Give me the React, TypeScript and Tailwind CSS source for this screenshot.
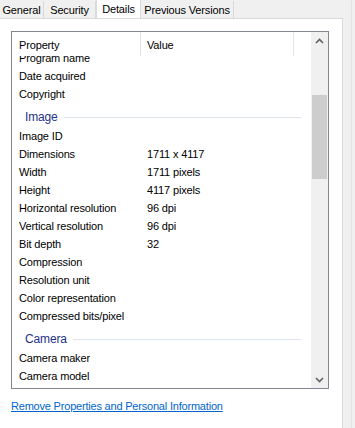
import React from "react";

const font = { fontFamily: '"Liberation Sans", Arial, sans-serif' };

type Row = { label: string; value?: string } | { group: string };

const rows: Row[] = [
  { label: "Program name" },
  { label: "Date acquired" },
  { label: "Copyright" },
  { group: "Image" },
  { label: "Image ID" },
  { label: "Dimensions", value: "1711 x 4117" },
  { label: "Width", value: "1711 pixels" },
  { label: "Height", value: "4117 pixels" },
  { label: "Horizontal resolution", value: "96 dpi" },
  { label: "Vertical resolution", value: "96 dpi" },
  { label: "Bit depth", value: "32" },
  { label: "Compression" },
  { label: "Resolution unit" },
  { label: "Color representation" },
  { label: "Compressed bits/pixel" },
  { group: "Camera" },
  { label: "Camera maker" },
  { label: "Camera model" },
];

function Chevron({ up }: { up?: boolean }) {
  return (
    <svg width="9" height="6" viewBox="0 0 9 6">
      <path
        d={up ? "M1 5 L4.5 1.5 L8 5" : "M1 1 L4.5 4.5 L8 1"}
        fill="none"
        stroke="#606060"
        strokeWidth="1.6"
      />
    </svg>
  );
}

function Tab({ label, width, active }: { label: string; width: string; active?: boolean }) {
  if (active) {
    return (
      <div
        className={`${width} h-[18px] -mb-px relative z-10 bg-white border-l border-r border-[#d9d9d9] flex items-start justify-center pt-[1px] text-[11px] text-black`}
      >
        {label}
      </div>
    );
  }
  return (
    <div
      className={`${width} h-[17px] mt-[1px] bg-[#f0f0f0] border-r border-[#d9d9d9] flex items-center justify-center pt-[2px] text-[11px] text-black`}
    >
      {label}
    </div>
  );
}

export default function App() {
  return (
    <div className="w-[355px] h-[428px] bg-[#f0f0f0] flex overflow-hidden tracking-[-0.15px]" style={font}>
      <div className="w-[343px] flex flex-col">
        <div className="flex h-[18px] items-start">
          <Tab label="General" width="w-[44px]" />
          <Tab label="Security" width="w-[52px]" />
          <Tab label="Details" width="w-[45px]" active />
          <Tab label="Previous Versions" width="w-[93px]" />
        </div>
        <div className="flex-1 bg-white border-t border-r border-[#d9d9d9] pl-[11px] pt-[12px]">
          <div className="w-[318px] h-[358px] border border-[#828790] flex">
            <div className="flex-1 flex flex-col overflow-hidden">
              <div className="h-[24px] shrink-0 flex relative z-10 bg-white text-[11px] text-black">
                <div className="w-[129px] pl-[7px] pt-[5px] border-r border-[#e5e5e5]">Property</div>
                <div className="w-[153px] pl-[6px] pt-[5px] border-r border-[#e5e5e5]">Value</div>
              </div>
              <div className="-mt-[7px]">
                {rows.map((r, i) =>
                  "group" in r ? (
                    <div key={i} className="h-[24px] flex items-center pt-[4px] pl-[13px] pr-[10px]">
                      <span className="text-[12px] text-[#1e3287]">{r.group}</span>
                      <div className="flex-1 h-px bg-[#dde4ec] ml-[6px]" />
                    </div>
                  ) : (
                    <div key={i} className="h-[18px] flex items-center text-[11px] text-black">
                      <div className="w-[135px] pl-[7px] whitespace-nowrap">{r.label}</div>
                      <div className="whitespace-nowrap">{r.value}</div>
                    </div>
                  )
                )}
              </div>
            </div>
            <div className="w-[17px] bg-[#f0f0f0] flex flex-col">
              <div className="h-[17px] flex items-center justify-center">
                <Chevron up />
              </div>
              <div className="flex-1 pt-[46px]">
                <div className="mx-auto w-[15px] h-[84px] bg-[#cdcdcd]" />
              </div>
              <div className="h-[17px] flex items-center justify-center">
                <Chevron />
              </div>
            </div>
          </div>
          <div className="mt-[9px] text-[11px] leading-[16px] tracking-[-0.2px]">
            <span className="text-[#0066cc] underline">Remove Properties and Personal Information</span>
          </div>
        </div>
      </div>
      <div className="ml-[8px] w-px h-full bg-[#e3e3e3]" />
    </div>
  );
}
